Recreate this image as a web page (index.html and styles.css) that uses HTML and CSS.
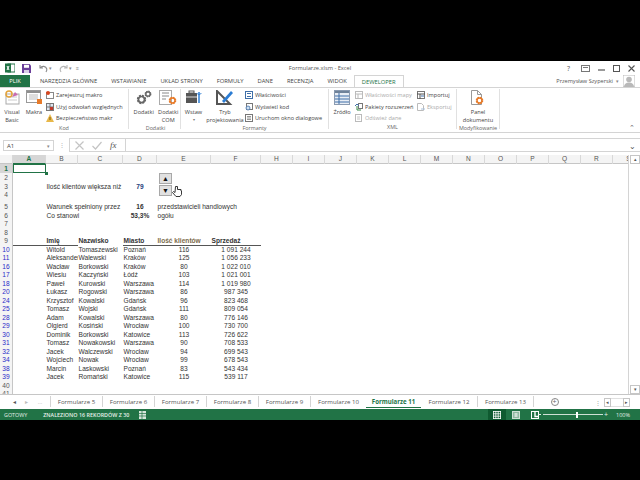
FILE: index.html
```html
<!DOCTYPE html>
<html lang="pl">
<head>
  <meta charset="UTF-8" />
  <title>Formularze.xlsm - Excel</title>
  <link rel="stylesheet" href="styles.css">
</head>
<body>
  <svg class="defs" width="0" height="0">
    <symbol id="gear" viewBox="0 0 20 20">
      <circle cx="10" cy="10" r="6.5" fill="none" stroke="currentColor" stroke-width="4" stroke-dasharray="3.4 1.7"/>
      <circle cx="10" cy="10" r="5.5" fill="none" stroke="currentColor" stroke-width="3"/>
    </symbol>
  </svg>

  <div class="window">
    <div class="titlebar">
      <div class="qat">
        <svg width="10" height="10" viewBox="0 0 10 10"><rect x="3" y="1" width="7" height="8" fill="#fff" stroke="#217346"/><rect x="0" y="0.5" width="6" height="9" fill="#217346"/><path d="M2 3l2 4M4 3l-2 4" stroke="#fff"/></svg>
        <svg class="ml6" width="9" height="9" viewBox="0 0 9 9"><path d="M0 0h7.5l1.5 1.5v7.5h-9z" fill="#6b3f9a"/><rect x="2" y="0.8" width="5" height="3" fill="#fff"/><rect x="2" y="6" width="5" height="3" fill="#d9cfe6"/></svg>
        <svg class="ml7" width="9" height="9" viewBox="0 0 9 9"><path d="M1 1v3h3M1.3 4c1.500-2.500 5.700-2.200 6.500 1 .2 1-.2 2-.8 3" fill="none" stroke="#8a8a8a" stroke-width="1.1"/></svg>
        <span class="caret">▾</span>
        <svg class="ml6" width="9" height="9" viewBox="0 0 9 9"><path d="M8 1v3h-3M7.7 4c-1.500-2.500-5.700-2.200-6.500 1-.2 1 .2 2 .8 3" fill="none" stroke="#b5b5b5" stroke-width="1.1"/></svg>
        <span class="caret">▾</span>
        <span class="caret ml3">≡</span>
      </div>
      <div class="doc-title">Formularze.xlsm - Excel</div>
      <div class="win-btns">
        <span class="win-btn">?</span>
        <svg width="9" height="7" viewBox="0 0 9 7"><rect x="0.5" y="0.5" width="8" height="6" fill="none" stroke="#777"/><path d="M2 2.500h5" stroke="#777"/></svg>
        <svg width="7" height="7" viewBox="0 0 7 7"><path d="M0 5h7" stroke="#555" stroke-width="1.2"/></svg>
        <svg width="7" height="7" viewBox="0 0 7 7"><rect x="0.5" y="0.5" width="6" height="6" fill="none" stroke="#555"/></svg>
        <svg width="7" height="7" viewBox="0 0 7 7"><path d="M0.500 0.500l6 6M6.500 0.500l-6 6" stroke="#555" stroke-width="1.1"/></svg>
      </div>
    </div>

    <div class="tabs">
      <div class="tab tab-file">PLIK</div>
      <div class="tab">NARZĘDZIA GŁÓWNE</div>
      <div class="tab">WSTAWIANIE</div>
      <div class="tab">UKŁAD STRONY</div>
      <div class="tab">FORMUŁY</div>
      <div class="tab">DANE</div>
      <div class="tab">RECENZJA</div>
      <div class="tab">WIDOK</div>
      <div class="tab tab-active">DEWELOPER</div>
      <div class="account">
        <span>Przemysław Szyperski</span>
        <span class="caret">▾</span>
        <svg class="avatar" width="12" height="12" viewBox="0 0 12 12"><rect width="12" height="12" fill="#fff" stroke="#bbb"/><circle cx="6" cy="4.5" r="2.8" fill="#b9b9b9"/><path d="M1 12c0-3 2-4.500 5-4.500s5 1.500 5 4.500z" fill="#b9b9b9"/></svg>
      </div>
    </div>

    <div class="ribbon">
      <div class="group g-kod">
        <div class="group-body">
          <div class="big w24">
            <svg width="16" height="15" viewBox="0 0 16 15"><rect x="2" y="4" width="13" height="10" fill="#fff" stroke="#aaa"/><path d="M4 7h9M4 10h9" stroke="#ccc"/><circle cx="5" cy="4" r="3" fill="none" stroke="#e3a33a" stroke-width="1.5"/><path d="M8 7l3-5 3 3z" fill="#c86bb0"/></svg>
            <span>Visual<br>Basic</span>
          </div>
          <div class="big w20">
            <svg width="17" height="15" viewBox="0 0 17 15"><rect x="0.5" y="0.5" width="14" height="12" fill="#fff" stroke="#999"/><rect x="1" y="1" width="13" height="2" fill="#8f8f8f"/><path d="M3 5h9M3 7h9M3 9h9" stroke="#bbb"/><rect x="11" y="9" width="5" height="5" fill="#e77b2a"/></svg>
            <span>Makra</span>
          </div>
          <div class="list ml2">
            <div class="item"><svg width="8" height="8" viewBox="0 0 8 8"><rect x="0.5" y="1.5" width="7" height="6" fill="#fff" stroke="#888"/><circle cx="2" cy="2" r="2" fill="#d8461e"/></svg>Zarejestruj makro</div>
            <div class="item"><svg width="8" height="8" viewBox="0 0 8 8"><rect x="0.5" y="0.5" width="7" height="7" fill="#dfe6f1" stroke="#777"/><path d="M4 0v8M0 4h8" stroke="#777"/><rect x="4" y="4" width="3" height="3" fill="#c0392b"/></svg>Użyj odwołań względnych</div>
            <div class="item"><svg width="8" height="8" viewBox="0 0 8 8"><path d="M4 0l4 8h-8z" fill="#e8b84a"/><path d="M4 3v3" stroke="#7a5b10"/></svg>Bezpieczeństwo makr</div>
          </div>
        </div>
        <div class="group-label">Kod</div>
      </div>

      <div class="group g-dodatki">
        <div class="group-body">
          <div class="big w26">
            <svg class="gears" width="16" height="15" viewBox="0 0 16 15"><use href="#gear" x="0" y="4" width="11" height="11"/><use href="#gear" x="8" y="0" width="8" height="8"/></svg>
            <span>Dodatki</span>
          </div>
          <div class="big w24">
            <svg width="18" height="15" viewBox="0 0 18 15"><rect x="0.5" y="0.5" width="12" height="14" fill="#fff" stroke="#aaa"/><path d="M3 3h7M3 6h7M3 9h4" stroke="#8a8a8a"/><use href="#gear" x="9" y="6" width="9" height="9" color="#e77b2a"/></svg>
            <span>Dodatki<br>COM</span>
          </div>
        </div>
        <div class="group-label">Dodatki</div>
      </div>

      <div class="group g-formanty">
        <div class="group-body">
          <div class="big w25">
            <svg width="16" height="15" viewBox="0 0 16 15"><rect x="0" y="3" width="11" height="10" fill="#555"/><rect x="3" y="1" width="5" height="2" fill="none" stroke="#555"/><path d="M0 7h11" stroke="#ddd"/><path d="M13 2v11" stroke="#2b7cd3" stroke-width="1.5"/><path d="M11 3c0 2 4 2 4 0" fill="none" stroke="#2b7cd3"/></svg>
            <span>Wstaw</span>
            <span class="caret-sm">▾</span>
          </div>
          <div class="big w38">
            <svg width="18" height="15" viewBox="0 0 18 15"><path d="M1 1v13h13z" fill="none" stroke="#555" stroke-width="2"/><path d="M6 11l9-10 2 2-9 10z" fill="#2b7cd3"/></svg>
            <span>Tryb<br>projektowania</span>
          </div>
          <div class="list ml1">
            <div class="item"><svg width="8" height="8" viewBox="0 0 8 8"><rect x="0.5" y="0.5" width="7" height="7" fill="#fff" stroke="#3f6fa8"/><path d="M2 2.500h4M2 5.500h4" stroke="#3f6fa8"/></svg>Właściwości</div>
            <div class="item"><svg width="8" height="8" viewBox="0 0 8 8"><rect x="1.5" y="0.5" width="6" height="6" fill="#fff" stroke="#777"/><circle cx="3" cy="5" r="2" fill="#cfe0f1" stroke="#3f6fa8" stroke-width="0.8"/></svg>Wyświetl kod</div>
            <div class="item"><svg width="8" height="8" viewBox="0 0 8 8"><rect x="0.5" y="0.5" width="7" height="7" fill="#fff" stroke="#777"/><path d="M2 2.500h4M2 4h4M2 5.500h4" stroke="#999"/></svg>Uruchom okno dialogowe</div>
          </div>
        </div>
        <div class="group-label">Formanty</div>
      </div>

      <div class="group g-xml">
        <div class="group-body">
          <div class="big w26">
            <svg width="16" height="15" viewBox="0 0 16 15"><rect x="0.5" y="0.5" width="15" height="14" fill="#e9eef5" stroke="#8a9ab0"/><rect x="1" y="1" width="14" height="2" fill="#6f8299"/><path d="M5 3v11M1 6h14M1 9h14M1 12h14" stroke="#3f6fa8"/></svg>
            <span>Źródło</span>
          </div>
          <div class="list list-xml">
            <div class="item off"><svg width="8" height="8" viewBox="0 0 8 8"><rect x="0.5" y="0.5" width="7" height="7" fill="#fff" stroke="#bbb"/><path d="M0 3h8M3 3v5" stroke="#bbb"/></svg>Właściwości mapy</div>
            <div class="item"><svg width="8" height="8" viewBox="0 0 8 8"><rect x="3.5" y="0.5" width="4" height="5" fill="#fff" stroke="#777"/><path d="M2 3v4h4" fill="none" stroke="#3a8a4a"/><path d="M0 3l2-2 2 2" fill="none" stroke="#3f6fa8"/></svg>Pakiety rozszerzeń</div>
            <div class="item off"><svg width="8" height="8" viewBox="0 0 8 8"><rect x="0.5" y="0.5" width="6" height="7" fill="#fff" stroke="#bbb"/><path d="M2 3h3M2 5h3" stroke="#c5c5c5"/></svg>Odśwież dane</div>
          </div>
          <div class="list">
            <div class="item"><svg width="8" height="8" viewBox="0 0 8 8"><rect x="0.5" y="0.5" width="7" height="7" fill="#fff" stroke="#777"/><path d="M0 3h8M3 3v5" stroke="#555"/><path d="M4 5h3" stroke="#3f6fa8"/></svg>Importuj</div>
            <div class="item off"><svg width="8" height="8" viewBox="0 0 8 8"><path d="M0.500 0.500h4l2 2v5h-6z" fill="#fff" stroke="#bbb"/><path d="M4 6h4" stroke="#a9c1dc"/></svg>Eksportuj</div>
          </div>
        </div>
        <div class="group-label">XML</div>
      </div>

      <div class="group g-mod">
        <div class="group-body">
          <div class="big w-full">
            <svg width="14" height="15" viewBox="0 0 14 15"><path d="M0.500 0.500h6l4 4v10h-10z" fill="#fff" stroke="#999"/><path d="M6.500 0.500v4h4" fill="none" stroke="#999"/><use href="#gear" x="4" y="6" width="9" height="9" color="#e77b2a"/></svg>
            <span>Panel<br>dokumentu</span>
          </div>
        </div>
        <div class="group-label">Modyfikowanie</div>
      </div>

      <div class="collapse">⌃</div>
    </div>

    <div class="formula-bar">
      <div class="name-box"><span>A1</span><span class="caret">▾</span></div>
      <div class="fx-dots">⋮</div>
      <div class="fx-btns">
        <svg width="9" height="9" viewBox="0 0 9 9"><path d="M0.500 0.500l8 8M8.500 0.500l-8 8" stroke="#c4c4c4" stroke-width="1.2"/></svg>
        <svg width="10" height="9" viewBox="0 0 10 9"><path d="M0.500 5l3 3 6-7" fill="none" stroke="#c4c4c4" stroke-width="1.2"/></svg>
        <span class="fx">fx</span>
      </div>
      <div class="fx-input"><span class="caret">⌄</span></div>
    </div>

    <div class="main">
      <div class="sheet">
        <div class="col-head">
          <span class="corner"></span>
          <span class="sel-col">A</span><span>B</span><span>C</span><span>D</span><span>E</span><span>F</span>
          <span>H</span><span>I</span><span>J</span><span>K</span><span>L</span><span>M</span><span>N</span><span>O</span><span>P</span><span>Q</span><span>R</span><span>S</span>
        </div>

        <div class="row row-top"><span class="rh sel-row">1</span><span class="active-cell"></span></div>
        <div class="row row-top"><span class="rh">2</span></div>
        <div class="row row-top"><span class="rh">3</span><span class="cb">Ilość klientów większa niż</span><span class="cd num-in">79</span></div>
        <div class="row row-tall"><span class="rh">4</span></div>
        <div class="row"><span class="rh">5</span><span class="cb">Warunek spełniony przez</span><span class="cd bold">16</span><span class="ce-l">przedstawicieli handlowych</span></div>
        <div class="row"><span class="rh">6</span><span class="cb">Co stanowi</span><span class="cd bold">53,3%</span><span class="ce-l">ogółu</span></div>
        <div class="row"><span class="rh">7</span></div>
        <div class="row"><span class="rh">8</span></div>
        <div class="row row-head"><span class="rh">9</span><span class="cb">Imię</span><span class="cc">Nazwisko</span><span class="cd-l">Miasto</span><span class="ce-l filtered">Ilość klientów</span><span class="cf-l">Sprzedaż</span></div>
        <div class="row"><span class="rh hit">10</span><span class="cb">Witold</span><span class="cc">Tomaszewski</span><span class="cd-l">Poznań</span><span class="ce">116</span><span class="cf">1 091 244</span></div>
        <div class="row"><span class="rh hit">11</span><span class="cb">Aleksander</span><span class="cc">Walewski</span><span class="cd-l">Kraków</span><span class="ce">125</span><span class="cf">1 056 233</span></div>
        <div class="row"><span class="rh hit">16</span><span class="cb">Wacław</span><span class="cc">Borkowski</span><span class="cd-l">Kraków</span><span class="ce">80</span><span class="cf">1 022 010</span></div>
        <div class="row"><span class="rh hit">17</span><span class="cb">Wiesiu</span><span class="cc">Kaczyński</span><span class="cd-l">Łódź</span><span class="ce">103</span><span class="cf">1 021 001</span></div>
        <div class="row"><span class="rh hit">18</span><span class="cb">Paweł</span><span class="cc">Kurowski</span><span class="cd-l">Warszawa</span><span class="ce">114</span><span class="cf">1 019 980</span></div>
        <div class="row"><span class="rh hit">20</span><span class="cb">Łukasz</span><span class="cc">Rogowski</span><span class="cd-l">Warszawa</span><span class="ce">86</span><span class="cf">987 345</span></div>
        <div class="row"><span class="rh hit">24</span><span class="cb">Krzysztof</span><span class="cc">Kowalski</span><span class="cd-l">Gdańsk</span><span class="ce">96</span><span class="cf">823 468</span></div>
        <div class="row"><span class="rh hit">25</span><span class="cb">Tomasz</span><span class="cc">Wojski</span><span class="cd-l">Gdańsk</span><span class="ce">111</span><span class="cf">809 054</span></div>
        <div class="row"><span class="rh hit">28</span><span class="cb">Adam</span><span class="cc">Kowalski</span><span class="cd-l">Warszawa</span><span class="ce">80</span><span class="cf">776 146</span></div>
        <div class="row"><span class="rh hit">29</span><span class="cb">Olgierd</span><span class="cc">Kosiński</span><span class="cd-l">Wrocław</span><span class="ce">100</span><span class="cf">730 700</span></div>
        <div class="row"><span class="rh hit">30</span><span class="cb">Dominik</span><span class="cc">Borkowski</span><span class="cd-l">Katowice</span><span class="ce">113</span><span class="cf">726 622</span></div>
        <div class="row"><span class="rh hit">31</span><span class="cb">Tomasz</span><span class="cc">Nowakowski</span><span class="cd-l">Warszawa</span><span class="ce">90</span><span class="cf">708 533</span></div>
        <div class="row"><span class="rh hit">32</span><span class="cb">Jacek</span><span class="cc">Walczewski</span><span class="cd-l">Wrocław</span><span class="ce">94</span><span class="cf">699 543</span></div>
        <div class="row"><span class="rh hit">34</span><span class="cb">Wojciech</span><span class="cc">Nowak</span><span class="cd-l">Wrocław</span><span class="ce">99</span><span class="cf">678 543</span></div>
        <div class="row"><span class="rh hit">38</span><span class="cb">Marcin</span><span class="cc">Laskowski</span><span class="cd-l">Poznań</span><span class="ce">83</span><span class="cf">543 434</span></div>
        <div class="row"><span class="rh hit">39</span><span class="cb">Jacek</span><span class="cc">Romański</span><span class="cd-l">Katowice</span><span class="ce">115</span><span class="cf">539 117</span></div>
        <div class="row"><span class="rh">40</span></div>
        <div class="row"><span class="rh">41</span></div>

        <div class="spinner">
          <div class="spin-btn">▲</div>
          <div class="spin-btn">▼</div>
        </div>
        <svg class="hand" width="10" height="11" viewBox="0 0 10 11"><path d="M3.500 0.500h2v3h3.500v1.500h0.500v3.500l-1.500 2h-4l-3.500-4 1-1 1.500 1z" fill="#fff" stroke="#222" stroke-width="0.9"/></svg>
      </div>
      <div class="vscroll">
        <div class="sb-btn">▴</div>
        <div class="sb-track"></div>
        <div class="sb-btn">▾</div>
      </div>
    </div>

    <div class="sheet-tabs">
      <div class="nav">
        <span>◂</span><span class="nav-off">▸</span><span class="nav-off">...</span>
      </div>
      <div class="stab">Formularze 5</div>
      <div class="stab">Formularze 6</div>
      <div class="stab">Formularze 7</div>
      <div class="stab">Formularze 8</div>
      <div class="stab">Formularze 9</div>
      <div class="stab stab-wide">Formularze 10</div>
      <div class="stab stab-active">Formularze 11</div>
      <div class="stab stab-wide">Formularze 12</div>
      <div class="stab stab-wide">Formularze 13</div>
      <div class="add-sheet"><span class="add-circle">+</span></div>
      <div class="hscroll">
        <span class="hs-dots">⋮</span>
        <span class="sb-btn hs-btn">◂</span>
        <span class="hs-track"></span>
        <span class="sb-btn hs-btn">▸</span>
      </div>
    </div>

    <div class="statusbar">
      <span class="st-ready">GOTOWY</span>
      <span class="st-found">ZNALEZIONO 16 REKORDÓW Z 30</span>
      <svg class="st-macro" width="7" height="8" viewBox="0 0 7 8"><rect width="7" height="8" fill="#d7e6dc"/><path d="M0 2.500h7M3 0v8M0 5h7" stroke="#217346" stroke-width="0.7"/></svg>
      <div class="st-right">
        <span class="view view-on"><svg width="8" height="8" viewBox="0 0 8 8"><path d="M0.500 0v8M2.800 0v8M5.200 0v8M7.500 0v8M0 0.500h8M0 2.800h8M0 5.200h8M0 7.500h8" stroke="#fff" stroke-width="0.8"/></svg></span>
        <span class="view"><svg width="8" height="8" viewBox="0 0 8 8"><rect x="0.5" y="0.5" width="7" height="7" fill="#8fb8a0" stroke="#cfe0d5"/><rect x="2.5" y="2" width="3" height="4" fill="#cfe0d5"/></svg></span>
        <span class="view view-last"><svg width="8" height="8" viewBox="0 0 8 8"><rect x="0.5" y="0.5" width="7" height="7" fill="none" stroke="#fff"/><path d="M4 0.500v5h3.500" fill="none" stroke="#fff" stroke-width="1.4"/></svg></span>
        <span class="zoom-minus"></span>
        <span class="zoom-track"><i class="zoom-thumb"></i></span>
        <span class="zoom-sign">+</span>
        <span class="zoom-pct">100%</span>
      </div>
    </div>
  </div>
</body>
</html>
```

FILE: styles.css
```css
* {
  box-sizing: border-box;
}

body {
  margin: 0;
  height: 480px;
  overflow: hidden;
  background: #000;
  font-family: 'Open Sans', sans-serif;
  font-size: 5.6px;
  color: #444;
}

.defs {
  position: absolute;
}

.window {
  margin-top: 61px;
  height: 359px;
  background: #fff;
  display: flex;
  flex-direction: column;
}

.ml1 { margin-left: 1px; }
.ml2 { margin-left: 2px; }
.ml3 { margin-left: 3px; }
.ml6 { margin-left: 6px; }
.ml7 { margin-left: 7px; }

.caret {
  font-size: 5px;
  color: #888;
}

/* title bar */
.titlebar {
  height: 14px;
  display: grid;
  grid-template-columns: 1fr auto 1fr;
  align-items: center;
}

.qat {
  display: flex;
  align-items: center;
  gap: 1px;
  padding-left: 5px;
}

.doc-title {
  font-size: 5.7px;
  color: #555;
}

.win-btns {
  display: flex;
  justify-content: flex-end;
  align-items: center;
  gap: 8px;
  padding-right: 5px;
}

.win-btn {
  font-size: 7px;
  color: #555;
  margin-right: 3px;
}

/* ribbon tabs */
.tabs {
  height: 12px;
  display: flex;
  align-items: stretch;
  font-size: 5.8px;
  position: relative;
  z-index: 1;
}

.tab {
  padding: 0 7px;
  display: flex;
  align-items: center;
  color: #444;
  white-space: nowrap;
}

.tab-file {
  width: 30px;
  padding: 0;
  justify-content: center;
  margin-right: 3px;
  background: #217346;
  color: #fff;
}

.tab-active {
  color: #217346;
  background: #fff;
  border: 1px solid #d4d4d4;
  border-bottom: 0;
}

.account {
  margin-left: auto;
  display: flex;
  align-items: center;
  gap: 3px;
  padding-right: 5px;
  font-size: 5.6px;
  color: #555;
}

.avatar {
  margin-left: 1px;
}

/* ribbon */
.ribbon {
  height: 46px;
  display: flex;
  border-top: 1px solid #d4d4d4;
  border-bottom: 1px solid #d4d4d4;
  position: relative;
}

.group {
  display: flex;
  flex-direction: column;
  border-right: 1px solid #e1e1e1;
  margin: 1px 0 3px;
}

.g-kod { width: 129px; }
.g-dodatki { width: 52px; padding-left: 2px; }
.g-formanty { width: 148px; }
.g-xml { width: 128px; }
.g-mod { width: 43px; }

.group-body {
  flex: 1;
  display: flex;
}

.group-label {
  height: 9px;
  line-height: 9px;
  text-align: center;
  font-size: 5.4px;
  color: #666;
}

.big {
  display: flex;
  flex-direction: column;
  align-items: center;
  padding-top: 1px;
  text-align: center;
  line-height: 8px;
  white-space: nowrap;
}

.big svg {
  margin-bottom: 3px;
}

.w20 { width: 20px; }
.w24 { width: 24px; }
.w25 { width: 25px; }
.w26 { width: 26px; }
.w38 { width: 38px; }
.w-full { width: 100%; }

.caret-sm {
  font-size: 4px;
  line-height: 7px;
  color: #777;
}

.gears {
  color: #666;
}

.list {
  display: flex;
  flex-direction: column;
  gap: 3px;
  padding-top: 2px;
  white-space: nowrap;
}

.list-xml {
  width: 62px;
}

.item {
  height: 8.5px;
  display: flex;
  align-items: center;
  gap: 2px;
}

.off {
  color: #aaa;
}

.collapse {
  position: absolute;
  right: 5px;
  bottom: 0;
  font-size: 7px;
  color: #666;
}

/* formula bar */
.formula-bar {
  height: 22px;
  display: flex;
  align-items: center;
  padding: 2px 0 0 3px;
}

.name-box {
  width: 51px;
  height: 11px;
  margin-top: 1px;
  display: flex;
  justify-content: space-between;
  align-items: center;
  padding: 0 3px;
  border: 1px solid #d4d4d4;
  font-size: 6px;
}

.fx-dots {
  width: 15px;
  text-align: center;
  color: #aaa;
}

.fx-btns {
  width: 56px;
  height: 14px;
  display: flex;
  align-items: center;
  gap: 8px;
  padding-left: 5px;
  border: 1px solid #d4d4d4;
  border-right: 0;
}

.fx {
  font-family: 'Liberation Serif', serif;
  font-style: italic;
  font-size: 9px;
  color: #555;
}

.fx-input {
  flex: 1;
  height: 14px;
  display: flex;
  justify-content: flex-end;
  align-items: center;
  padding-right: 4px;
  border: 1px solid #d4d4d4;
  border-right: 0;
}

.fx-input .caret {
  font-size: 8px;
  color: #555;
}

/* sheet */
.main {
  flex: 1;
  min-height: 0;
  display: flex;
}

.sheet {
  flex: 1;
  min-width: 0;
  overflow: hidden;
  position: relative;
  font-family: 'Liberation Sans', Arial, sans-serif;
  font-size: 6.6px;
  color: #333;
}

.col-head {
  height: 9px;
  display: grid;
  grid-template-columns: 13px 33px 32px 45px 34px 54px 50px repeat(12, 32px);
  background: #f4f4f4;
  border-bottom: 1px solid #c6c6c6;
  color: #555;
  line-height: 8px;
  text-align: center;
}

.col-head span {
  border-right: 1px solid #d8d8d8;
}

.col-head .sel-col {
  background: #d6d6d6;
  color: #217346;
  font-weight: bold;
  border-bottom: 1px solid #217346;
}

.row {
  height: 8.5px;
  display: grid;
  grid-template-columns: 13px 33px 32px 45px 34px 54px 50px;
  align-items: end;
  line-height: 8.5px;
  white-space: nowrap;
}

.row-top {
  height: 9px;
  line-height: 9px;
}

.row-tall {
  height: 12.25px;
}

.row-head {
  font-weight: bold;
  border-bottom: 1px solid #555;
  margin-right: 367px;
}

.rh {
  grid-column: 1;
  align-self: stretch;
  background: #f4f4f4;
  border-right: 1px solid #c6c6c6;
  text-align: center;
  color: #555;
  font-weight: normal;
}

.hit {
  color: #2a2ac8;
}

.sel-row {
  background: #d6d6d6;
  color: #217346;
  font-weight: bold;
}

.active-cell {
  grid-column: 2;
  align-self: stretch;
  border: 1.5px solid #217346;
  position: relative;
}

.active-cell::after {
  content: "";
  position: absolute;
  right: -2.5px;
  bottom: -2.5px;
  width: 3px;
  height: 3px;
  background: #217346;
}

.cb { grid-column: 3; padding-left: 0.5px; }
.cc { grid-column: 4; padding-left: 0.5px; background: #fff; }
.cd { grid-column: 5; text-align: center; }
.cd-l { grid-column: 5; padding-left: 0.5px; }
.ce { grid-column: 6; text-align: center; }
.ce-l { grid-column: 6; padding-left: 0.5px; }
.cf { grid-column: 7; text-align: center; }
.cf-l { grid-column: 7; padding-left: 0.5px; }

.bold {
  font-weight: bold;
}

.num-in {
  font-weight: bold;
  color: #1f3d7a;
}

.filtered {
  color: #7a6a4a;
}

.spinner {
  position: absolute;
  left: 159px;
  top: 18px;
  width: 13px;
  display: flex;
  flex-direction: column;
  gap: 1px;
}

.spin-btn {
  height: 11px;
  background: #e1e1e1;
  border: 1px solid #a8a8a8;
  color: #111;
  font-size: 7px;
  line-height: 9px;
  text-align: center;
}

.hand {
  position: absolute;
  left: 172px;
  top: 31px;
}

/* scrollbars */
.vscroll {
  width: 12px;
  display: flex;
  flex-direction: column;
  border-left: 1px solid #d4d4d4;
  padding-left: 1px;
}

.sb-btn {
  flex: none;
  width: 10px;
  height: 9px;
  background: #fff;
  border: 1px solid #c6c6c6;
  color: #555;
  font-size: 5px;
  line-height: 7px;
  text-align: center;
}

.sb-track {
  flex: 1;
}

/* sheet tabs */
.sheet-tabs {
  height: 15px;
  display: flex;
  align-items: stretch;
  border-top: 1px solid #c6c6c6;
  font-size: 6.1px;
  color: #555;
}

.nav {
  width: 50px;
  display: flex;
  align-items: center;
  padding-left: 13px;
  font-size: 6px;
}

.nav span {
  width: 14px;
}

.nav-off {
  color: #bbb;
}

.stab {
  width: 52px;
  display: flex;
  justify-content: center;
  align-items: center;
  margin: 1px 0 2px;
  border-left: 1px solid #d4d4d4;
  white-space: nowrap;
}

.stab-wide {
  width: 56px;
}

.stab-active {
  width: 55px;
  margin-bottom: 1px;
  border-left: 0;
  border-bottom: 1px solid #217346;
  color: #217346;
  font-weight: bold;
}

.stab-active + .stab {
  border-left: 0;
}

.add-sheet {
  width: 42px;
  display: flex;
  justify-content: center;
  align-items: center;
  margin: 1px 0 2px;
  border-left: 1px solid #d4d4d4;
  color: #666;
}

.add-circle {
  width: 8px;
  height: 8px;
  border: 1px solid #888;
  border-radius: 50%;
  font-size: 7px;
  line-height: 5px;
  text-align: center;
}

.hscroll {
  flex: 1;
  display: flex;
  align-items: center;
  padding-left: 20px;
}

.hs-dots {
  width: 9px;
  color: #999;
}

.hs-btn {
  width: 7px;
}

.hs-track {
  width: 12px;
  height: 9px;
  border-top: 1px solid #e0e0e0;
  border-bottom: 1px solid #e0e0e0;
}

/* status bar */
.statusbar {
  height: 11px;
  display: flex;
  align-items: center;
  padding-left: 4px;
  background: #217346;
  color: #e6f0ea;
  font-size: 5.4px;
  white-space: nowrap;
}

.st-found {
  margin-left: 16px;
  font-weight: 600;
}

.st-macro {
  margin-left: 10px;
}

.st-right {
  margin-left: auto;
  height: 100%;
  display: flex;
  align-items: center;
  padding-right: 10px;
}

.view {
  width: 18px;
  height: 100%;
  margin-right: 1px;
  display: flex;
  justify-content: center;
  align-items: center;
}

.view-last {
  margin-right: -6px;
}

.view-on {
  background: #0f5a30;
}

.zoom-minus {
  width: 3px;
  height: 1px;
  margin-right: 2px;
  background: #e6f0ea;
}

.zoom-sign {
  width: 6px;
  text-align: center;
  font-size: 7px;
  line-height: 7px;
}

.zoom-track {
  width: 60px;
  height: 1px;
  background: #cfe0d5;
  position: relative;
}

.zoom-thumb {
  position: absolute;
  left: 33px;
  top: -2.5px;
  width: 2px;
  height: 6px;
  background: #fff;
}

.zoom-pct {
  width: 14px;
  margin-left: 7px;
  font-size: 5.5px;
}
```
